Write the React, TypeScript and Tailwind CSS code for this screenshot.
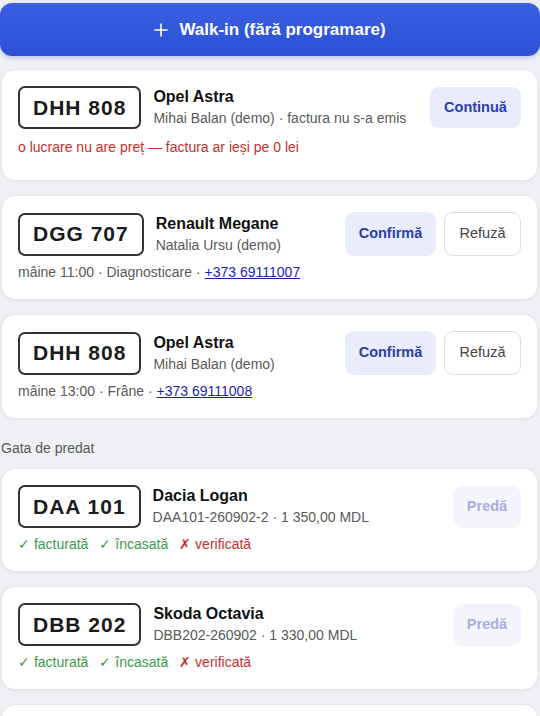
import React from 'react';

type Flag = { ok: boolean; label: string };

const font = { fontFamily: '"Liberation Sans", Arial, sans-serif' };

const Plate: React.FC<{ text: string }> = ({ text }) => (
  <div className="shrink-0 h-[43px] px-[13px] flex items-center border-2 border-[#333] rounded-[7px] bg-white text-[21px] font-bold tracking-[1px] text-[#1b1b1b]">
    {text}
  </div>
);

const Header: React.FC<{ plate: string; title: string; sub: string; children?: React.ReactNode }> = ({ plate, title, sub, children }) => (
  <div className="flex items-center">
    <Plate text={plate} />
    <div className="ml-[12px] flex-1 min-w-0">
      <div className="text-[16px] font-bold leading-[20px] text-[#111]">{title}</div>
      <div className="text-[14px] leading-[20px] text-[#595959] mt-[1px] whitespace-nowrap">{sub}</div>
    </div>
    {children}
  </div>
);

const Card: React.FC<{ children?: React.ReactNode; pb?: string }> = ({ children, pb = 'pb-[17px]' }) => (
  <div className={`ml-[1px] mr-[2px] bg-white rounded-[14px] border border-[#e6e8ee] shadow-[0_1px_3px_rgba(0,0,0,0.06)] pt-[16px] px-[16px] ${pb}`}>
    {children}
  </div>
);

const ConfirmButtons = () => (
  <div className="flex gap-2 shrink-0">
    <button className="h-[44px] w-[91px] rounded-[9px] bg-[#e8ecfb] text-[14.5px] font-bold text-[#2d40a8]">Confirmă</button>
    <button className="h-[44px] w-[77px] rounded-[9px] bg-white border border-[#dcdfe6] text-[14.5px] text-[#444]">Refuză</button>
  </div>
);

const Appointment: React.FC<{ plate: string; title: string; sub: string; when: string; kind: string; phone: string }> = (p) => (
  <Card>
    <Header plate={p.plate} title={p.title} sub={p.sub}>
      <ConfirmButtons />
    </Header>
    <div className="mt-[6px] text-[14px] leading-[20px] text-[#595959]">
      {p.when} · {p.kind} · <a href="#" className="text-[#1b1fb8] underline">{p.phone}</a>
    </div>
  </Card>
);

const Ready: React.FC<{ plate: string; title: string; sub: string; flags: Flag[] }> = (p) => (
  <Card>
    <Header plate={p.plate} title={p.title} sub={p.sub}>
      <button disabled className="shrink-0 h-[42px] w-[68px] rounded-[9px] bg-[#f4f5fb] text-[14.5px] font-bold text-[#a8aede]">Predă</button>
    </Header>
    <div className="mt-[6px] flex gap-[11px] text-[14px] leading-[20px]">
      {p.flags.map(f => (
        <span key={f.label} className={f.ok ? 'text-[#3a9a4a]' : 'text-[#c62f2f]'}>
          {f.ok ? '✓' : '✗'} {f.label}
        </span>
      ))}
    </div>
  </Card>
);

const flags: Flag[] = [
  { ok: true, label: 'facturată' },
  { ok: true, label: 'încasată' },
  { ok: false, label: 'verificată' },
];

export default function App() {
  return (
    <div className="h-[716px] bg-[#eef0f4] pt-[3px] overflow-hidden" style={font}>
      <button className="w-full h-[53px] rounded-[12px] bg-gradient-to-b from-[#3a60e2] to-[#2c4fd4] shadow-[0_2px_4px_rgba(40,70,200,0.25)] flex items-center justify-center gap-[11px] text-white text-[17px] font-bold">
        <svg width="14" height="14" viewBox="0 0 14 14" fill="none" stroke="white" strokeWidth="1.6" strokeLinecap="round">
          <path d="M7 1v12M1 7h12" />
        </svg>
        Walk-in (fără programare)
      </button>

      <div className="mt-[13px] flex flex-col gap-[14px]">
        <Card pb="pb-[23px]">
          <Header plate="DHH 808" title="Opel Astra" sub="Mihai Balan (demo) · factura nu s-a emis">
            <button className="shrink-0 h-[41px] w-[91px] rounded-[9px] bg-[#e8ecfb] text-[14.5px] font-bold text-[#2d40a8]">Continuă</button>
          </Header>
          <div className="mt-[8px] text-[14px] leading-[20px] text-[#c62f2f]">
            o lucrare nu are preț — factura ar ieși pe 0 lei
          </div>
        </Card>

        <Appointment plate="DGG 707" title="Renault Megane" sub="Natalia Ursu (demo)" when="mâine 11:00" kind="Diagnosticare" phone="+373 69111007" />
        <Appointment plate="DHH 808" title="Opel Astra" sub="Mihai Balan (demo)" when="mâine 13:00" kind="Frâne" phone="+373 69111008" />

        <div className="pl-[1px] pt-[5px] -mb-[4px] text-[14px] leading-[20px] text-[#595959]">Gata de predat</div>

        <Ready plate="DAA 101" title="Dacia Logan" sub="DAA101-260902-2 · 1 350,00 MDL" flags={flags} />
        <Ready plate="DBB 202" title="Skoda Octavia" sub="DBB202-260902 · 1 330,00 MDL" flags={flags} />
        <Card pb="pb-[80px]" />
      </div>
    </div>
  );
}
